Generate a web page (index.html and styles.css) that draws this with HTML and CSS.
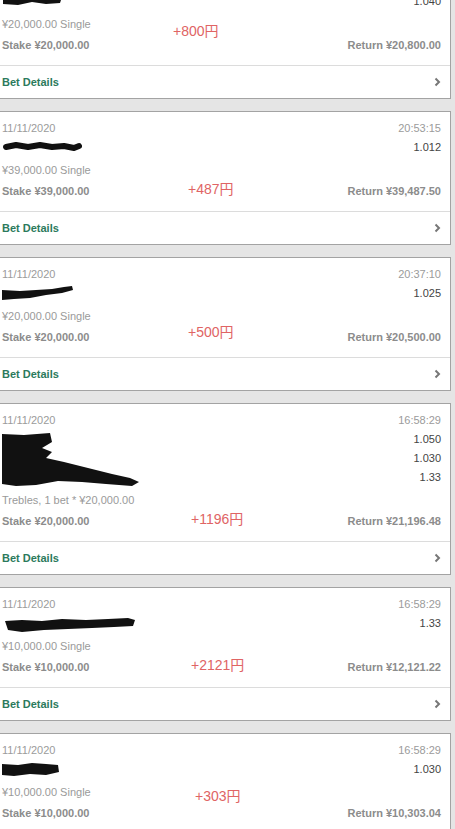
FILE: index.html
```html
<!DOCTYPE html>
<html>
<head>
  <title>Settled Bets</title>
  <link rel="stylesheet" href="styles.css">
</head>
<body>
  <div class="bets">

    <div class="bet">
      <div class="bet-body">
        <div class="row"><span class="date">11/11/2020</span><span class="time">21:02:44</span></div>
        <div class="legs">
          <svg class="scribble" width="64" height="19"><path d="M1 6 L12 4 L24 7 L36 4 L48 6 L60 5 L58 11 L44 12 L30 10 L16 13 L1 12 Z" fill="#111"/></svg>
          <div class="odds">1.040</div>
        </div>
        <div class="type">¥20,000.00 Single</div>
        <div class="row stake-row"><span>Stake ¥20,000.00</span><span>Return ¥20,800.00</span></div>
      </div>
      <div class="footer">
        <span class="details">Bet Details</span>
        <svg class="chevron" width="7" height="10"><polyline points="1.5,1.5 5,5 1.5,8.5" fill="none" stroke="#777" stroke-width="2"/></svg>
      </div>
      <div class="note" style="left: 173px; top: 55px;">+800円</div>
    </div>

    <div class="bet">
      <div class="bet-body">
        <div class="row"><span class="date">11/11/2020</span><span class="time">20:53:15</span></div>
        <div class="legs">
          <svg class="scribble" width="80" height="19"><path d="M4 9 L14 7 L26 9 L38 7 L50 9 L62 8 L72 10 L77 8" stroke="#111" stroke-width="6" fill="none" stroke-linecap="round" stroke-linejoin="round"/></svg>
          <div class="odds">1.012</div>
        </div>
        <div class="type">¥39,000.00 Single</div>
        <div class="row stake-row"><span>Stake ¥39,000.00</span><span>Return ¥39,487.50</span></div>
      </div>
      <div class="footer">
        <span class="details">Bet Details</span>
        <svg class="chevron" width="7" height="10"><polyline points="1.5,1.5 5,5 1.5,8.5" fill="none" stroke="#777" stroke-width="2"/></svg>
      </div>
      <div class="note" style="left: 188px; top: 67px;">+487円</div>
    </div>

    <div class="bet">
      <div class="bet-body">
        <div class="row"><span class="date">11/11/2020</span><span class="time">20:37:10</span></div>
        <div class="legs">
          <svg class="scribble" width="74" height="19"><path d="M0 6 L18 7 L34 6 L50 5 L62 3 L70 2 L71 6 L60 9 L44 11 L28 14 L12 15 L0 16 Z" fill="#111"/></svg>
          <div class="odds">1.025</div>
        </div>
        <div class="type">¥20,000.00 Single</div>
        <div class="row stake-row"><span>Stake ¥20,000.00</span><span>Return ¥20,500.00</span></div>
      </div>
      <div class="footer">
        <span class="details">Bet Details</span>
        <svg class="chevron" width="7" height="10"><polyline points="1.5,1.5 5,5 1.5,8.5" fill="none" stroke="#777" stroke-width="2"/></svg>
      </div>
      <div class="note" style="left: 188px; top: 64px;">+500円</div>
    </div>

    <div class="bet">
      <div class="bet-body">
        <div class="row"><span class="date">11/11/2020</span><span class="time">16:58:29</span></div>
        <div class="legs">
          <svg class="scribble" width="140" height="57"><path d="M0 4 L22 5 L48 3 L50 12 L40 18 L50 22 L44 28 L62 32 L86 38 L110 44 L128 48 L137 52 L130 56 L104 54 L80 52 L56 51 L34 55 L14 56 L0 54 Z" fill="#111"/></svg>
          <div class="odds">1.050<br>1.030<br>1.33</div>
        </div>
        <div class="type">Trebles, 1 bet * ¥20,000.00</div>
        <div class="row stake-row"><span>Stake ¥20,000.00</span><span>Return ¥21,196.48</span></div>
      </div>
      <div class="footer">
        <span class="details">Bet Details</span>
        <svg class="chevron" width="7" height="10"><polyline points="1.5,1.5 5,5 1.5,8.5" fill="none" stroke="#777" stroke-width="2"/></svg>
      </div>
      <div class="note" style="left: 191px; top: 105px;">+1196円</div>
    </div>

    <div class="bet">
      <div class="bet-body">
        <div class="row"><span class="date">11/11/2020</span><span class="time">16:58:29</span></div>
        <div class="legs">
          <svg class="scribble" width="136" height="19"><path d="M3 7 L20 6 L40 7 L60 5 L84 6 L106 5 L126 4 L133 6 L131 12 L112 13 L90 14 L66 15 L42 16 L20 18 L6 16 Z" fill="#111"/></svg>
          <div class="odds">1.33</div>
        </div>
        <div class="type">¥10,000.00 Single</div>
        <div class="row stake-row"><span>Stake ¥10,000.00</span><span>Return ¥12,121.22</span></div>
      </div>
      <div class="footer">
        <span class="details">Bet Details</span>
        <svg class="chevron" width="7" height="10"><polyline points="1.5,1.5 5,5 1.5,8.5" fill="none" stroke="#777" stroke-width="2"/></svg>
      </div>
      <div class="note" style="left: 191px; top: 67px;">+2121円</div>
    </div>

    <div class="bet">
      <div class="bet-body">
        <div class="row"><span class="date">11/11/2020</span><span class="time">16:58:29</span></div>
        <div class="legs">
          <svg class="scribble" width="60" height="19"><path d="M0 4 L16 5 L30 3 L44 4 L56 5 L57 12 L44 15 L28 14 L12 16 L0 15 Z" fill="#111"/></svg>
          <div class="odds">1.030</div>
        </div>
        <div class="type">¥10,000.00 Single</div>
        <div class="row stake-row"><span>Stake ¥10,000.00</span><span>Return ¥10,303.04</span></div>
      </div>
      <div class="footer">
        <span class="details">Bet Details</span>
        <svg class="chevron" width="7" height="10"><polyline points="1.5,1.5 5,5 1.5,8.5" fill="none" stroke="#777" stroke-width="2"/></svg>
      </div>
      <div class="note" style="left: 195px; top: 52px;">+303円</div>
    </div>

  </div>
</body>
</html>
```

FILE: styles.css
```css
/* Settled bets list */
body {
  margin: 0;
  background-color: #e5e5e5;
  font-family: "Liberation Sans", Arial, sans-serif;
  font-size: 11px;
}

.bets {
  display: flex;
  flex-direction: column;
  gap: 12px;
  margin: -35px 4px 0 0;
}

.bet {
  position: relative;
  background-color: #fff;
  border: 1px solid #a3a3a3;
  border-left: none;
}

.bet-body {
  padding: 7px 9px 10px 2px;
}

.row {
  display: flex;
  justify-content: space-between;
  line-height: 19px;
}

.date,
.time {
  color: #9b9b9b;
}

.legs {
  display: flex;
  justify-content: space-between;
}

.scribble {
  display: block;
}

.odds {
  color: #444;
  text-align: right;
  line-height: 19px;
}

.type {
  margin-top: 4px;
  color: #9a9a9a;
  line-height: 19px;
}

.stake-row {
  margin-top: 2px;
  color: #8c8c8c;
  font-weight: bold;
}

.footer {
  display: flex;
  justify-content: space-between;
  align-items: center;
  height: 32px;
  padding: 0 9px 0 2px;
  border-top: 1px solid #dcdcdc;
}

.details {
  color: #2b7a5c;
  font-weight: bold;
}

.chevron {
  display: block;
}

/* hand-added profit notes */
.note {
  position: absolute;
  color: #e06464;
  font-family: "Liberation Sans", "Noto Sans CJK JP", sans-serif;
  font-size: 14px;
  line-height: 20px;
}
```
